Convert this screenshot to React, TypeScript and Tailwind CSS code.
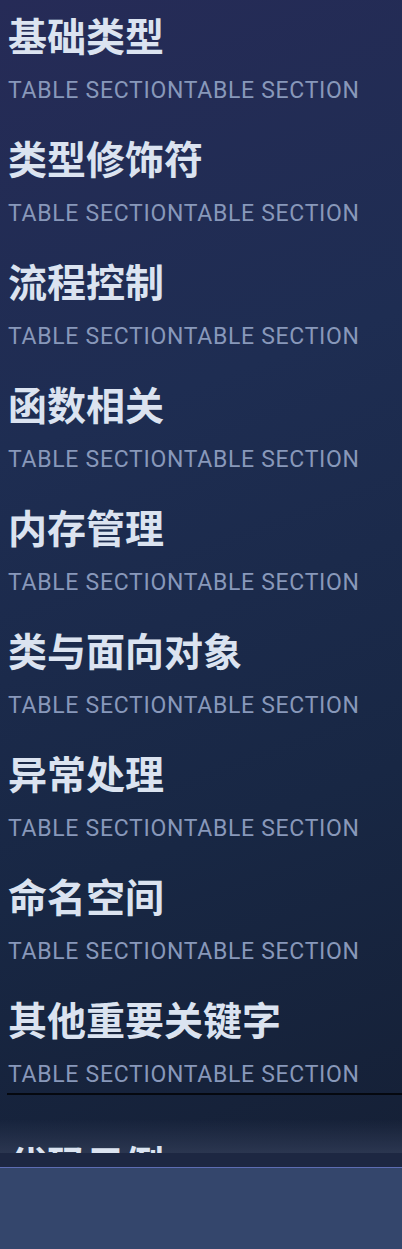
import React from 'react';

const sections = [
  '基础类型',
  '类型修饰符',
  '流程控制',
  '函数相关',
  '内存管理',
  '类与面向对象',
  '异常处理',
  '命名空间',
  '其他重要关键字',
];

export default function App() {
  return (
    <div className="w-[402px] h-[1249px] flex flex-col overflow-hidden bg-[#34466c]">
      {/* Scroll area */}
      <div className="relative h-[1153px] overflow-hidden bg-[linear-gradient(160deg,#262b57_0%,#1e2d52_35%,#182744_70%,#152036_100%)]">
        <div className="absolute left-0 right-0 bottom-0 h-[34px] bg-gradient-to-b from-[#1a263f00] to-[#2b3650] pointer-events-none" />
        <div className="relative flex flex-col gap-[33px] pt-[14px] pl-2">
          {sections.map((title) => (
            <div key={title} className="flex flex-col">
              <h2 className="text-[39px] leading-[40px] font-bold text-[#dbe3f0] font-['Noto_Sans_CJK_SC',sans-serif]">
                {title}
              </h2>
              <p className="mt-6 text-[23px] leading-[26px] text-[#8898ba] font-['Roboto',sans-serif] tracking-[0.7px] whitespace-nowrap">
                TABLE SECTIONTABLE SECTION
              </p>
            </div>
          ))}
        </div>
        <div className="relative ml-[7px] mt-[5px] h-[2px] bg-[#05080f]" />
        <h2 className="relative mt-[47px] pl-2 text-[39px] leading-[40px] font-bold text-[#dbe3f0] font-['Noto_Sans_CJK_SC',sans-serif]">
          代码示例
        </h2>
      </div>
      {/* Bottom bar */}
      <div className="h-[15px] bg-[#1d2742] border-b border-[#5d6db3]" />
      <div className="flex-1 bg-[#34466c]" />
    </div>
  );
}
